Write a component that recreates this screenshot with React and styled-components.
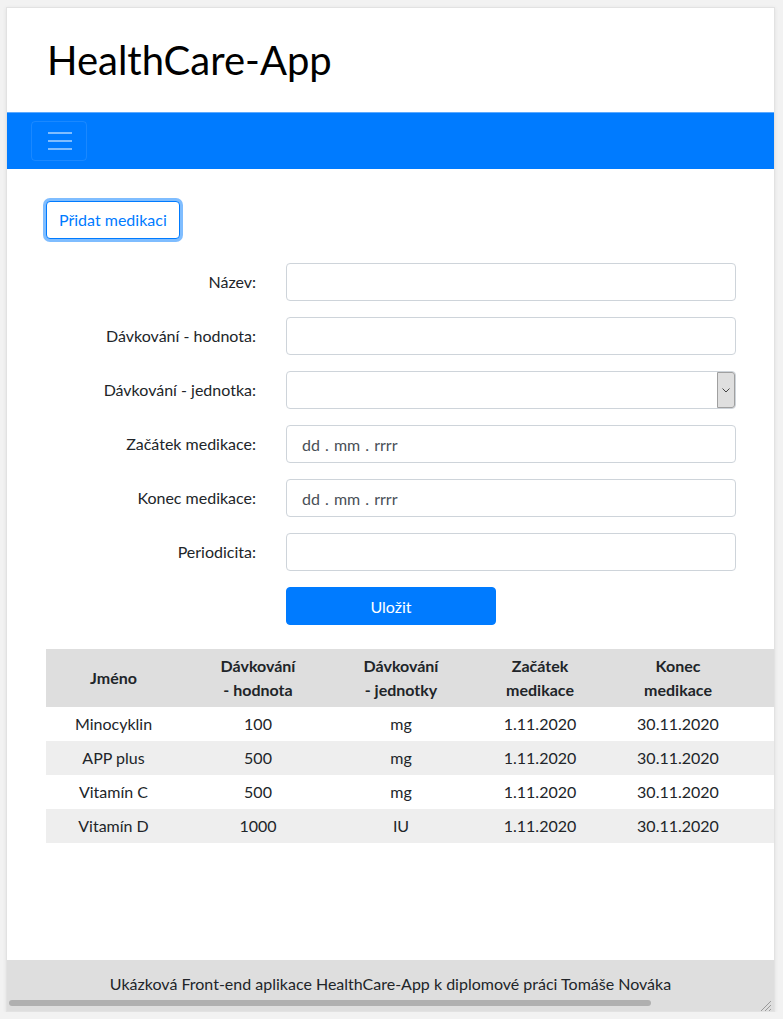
import React from 'react'
import styled, { createGlobalStyle } from 'styled-components'

const GlobalStyle = createGlobalStyle`
    html, body {
        margin: 0;
        padding: 0;
        background: #f2f2f2;
        font-family: Lato, "Noto Sans", sans-serif;
        color: #212529;
    }
`

const Frame = styled.div`
    margin: 7px 0 0 6px;
    width: 767px;
    height: 1003px;
    border: 1px solid #e2e2e2;
    box-shadow: 0 1px 4px rgba(0, 0, 0, 0.08);
    background: white;
    overflow: hidden;
`

const Page = styled.div`
    display: flex;
    flex-direction: column;
    height: 100%;
`

const Header = styled.header`
    height: 104px;
    flex-shrink: 0;
    display: flex;
    align-items: center;
    padding-left: 40px;

    h1 {
        margin: 0;
        font-size: 40px;
        font-weight: 400;
        line-height: 1.2;
        color: #000;
    }
`

const Navbar = styled.nav`
    background: #007bff;
    border-top: 1px solid #5caaff;
    height: 57px;
    flex-shrink: 0;
    padding: 8px 24px;
    box-sizing: border-box;
    display: flex;
    align-items: center;
`

const Toggler = styled.button`
    width: 56px;
    height: 40px;
    border: 1px solid rgba(255, 255, 255, 0.1);
    border-radius: 4px;
    background: transparent;
    display: flex;
    align-items: center;
    justify-content: center;
    padding: 0;
`

const Main = styled.main`
    padding: 32px 0 0 39px;
`

const AddButton = styled.button`
    font-family: inherit;
    font-size: 16px;
    line-height: 24px;
    color: #007bff;
    background: white;
    border: 1px solid #007bff;
    border-radius: 4px;
    padding: 6px 12px;
    box-shadow: 0 0 0 3px rgba(0, 123, 255, 0.5);
`

const Form = styled.form`
    display: grid;
    grid-template-columns: 210px 450px;
    column-gap: 30px;
    row-gap: 16px;
    margin-top: 24px;
`

const Label = styled.label`
    text-align: right;
    align-self: center;
    font-size: 16px;
    line-height: 24px;
`

const Input = styled.input`
    box-sizing: border-box;
    height: 38px;
    width: 100%;
    border: 1px solid #ced4da;
    border-radius: 4px;
    padding: 6px 15px;
    font-family: inherit;
    font-size: 16px;
    color: #495057;

    &::placeholder {
        color: #495057;
        opacity: 1;
        word-spacing: 1px;
    }
`

const SelectWrap = styled.div`
    position: relative;
    height: 38px;
`

const Select = styled.select`
    appearance: none;
    box-sizing: border-box;
    width: 100%;
    height: 38px;
    border: 1px solid #ced4da;
    border-radius: 4px;
    background: white;
    font-family: inherit;
    font-size: 16px;
`

const SelectArrow = styled.span`
    position: absolute;
    top: 1px;
    right: 1px;
    bottom: 1px;
    width: 16px;
    background: #dfdfdf;
    border: 1px solid #a0a0a0;
    border-radius: 0 3px 3px 0;
    display: flex;
    align-items: center;
    justify-content: center;
    pointer-events: none;
`

const SaveButton = styled.button`
    grid-column: 2;
    width: 210px;
    height: 38px;
    border: 1px solid #007bff;
    border-radius: 4px;
    background: #007bff;
    color: white;
    font-family: inherit;
    font-size: 16px;
`

const Table = styled.table`
    margin-top: 24px;
    border-collapse: collapse;
    table-layout: fixed;
    width: 843px;
    font-size: 16px;
    line-height: 24px;

    th, td {
        text-align: center;
        padding: 5px 2px;
        box-sizing: border-box;
    }
    th {
        background: #dedede;
        font-weight: 700;
    }
    tbody tr:nth-child(even) td {
        background: #eeeeee;
    }
`

const Th = styled.th`
    width: ${(p) => p.$w}px;
`

const Footer = styled.footer`
    margin-top: auto;
    flex-shrink: 0;
    background: #dedede;
    text-align: center;
    padding-top: 12px;
    font-size: 16px;
    line-height: 24px;
`

const ScrollRow = styled.div`
    height: 15px;
    display: flex;
    align-items: flex-start;
    justify-content: space-between;
    padding: 4px 2px 0 2px;
    box-sizing: border-box;
`

const ScrollThumb = styled.div`
    width: 642px;
    height: 6px;
    border-radius: 3px;
    background: #b0b0b0;
`

const meds = [
    ['Minocyklin', '100', 'mg'],
    ['APP plus', '500', 'mg'],
    ['Vitamín C', '500', 'mg'],
    ['Vitamín D', '1000', 'IU'],
]

const fields = [
    ['Název:', 'text'],
    ['Dávkování - hodnota:', 'text'],
    ['Dávkování - jednotka:', 'select'],
    ['Začátek medikace:', 'date'],
    ['Konec medikace:', 'date'],
    ['Periodicita:', 'text'],
]

function App() {
    return (
        <>
            <GlobalStyle />
            <Frame>
                <Page>
                    <Header>
                        <h1>HealthCare-App</h1>
                    </Header>

                    <Navbar>
                        <Toggler>
                            <svg width="30" height="30" viewBox="0 0 30 30">
                                <path d="M4 7h24M4 15h24M4 23h24" stroke="rgba(255,255,255,0.5)" strokeWidth="2" />
                            </svg>
                        </Toggler>
                    </Navbar>

                    <Main>
                        <AddButton>Přidat medikaci</AddButton>

                        <Form>
                            {fields.map(([label, type]) => (
                                <React.Fragment key={label}>
                                    <Label>{label}</Label>
                                    {type === 'select' ? (
                                        <SelectWrap>
                                            <Select />
                                            <SelectArrow>
                                                <svg width="8" height="5" viewBox="0 0 8 5">
                                                    <path d="M0.5 0.5L4 4L7.5 0.5" fill="none" stroke="#444" strokeWidth="1" />
                                                </svg>
                                            </SelectArrow>
                                        </SelectWrap>
                                    ) : (
                                        <Input placeholder={type === 'date' ? 'dd . mm . rrrr' : ''} />
                                    )}
                                </React.Fragment>
                            ))}
                            <SaveButton type="button">Uložit</SaveButton>
                        </Form>

                        <Table>
                            <thead>
                                <tr>
                                    <Th $w={135}>Jméno</Th>
                                    <Th $w={154}>Dávkování<br />- hodnota</Th>
                                    <Th $w={132}>Dávkování<br />- jednotky</Th>
                                    <Th $w={146}>Začátek<br />medikace</Th>
                                    <Th $w={130}>Konec<br />medikace</Th>
                                    <Th $w={146}></Th>
                                </tr>
                            </thead>
                            <tbody>
                                {meds.map((m) => (
                                    <tr key={m[0]}>
                                        <td>{m[0]}</td>
                                        <td>{m[1]}</td>
                                        <td>{m[2]}</td>
                                        <td>1.11.2020</td>
                                        <td>30.11.2020</td>
                                        <td></td>
                                    </tr>
                                ))}
                            </tbody>
                        </Table>
                    </Main>

                    <Footer>
                        Ukázková Front-end aplikace HealthCare-App k diplomové práci Tomáše Nováka
                        <ScrollRow>
                            <ScrollThumb />
                            <svg width="12" height="11" viewBox="0 0 12 11">
                                <path d="M11 1L1 11M11 5L5 11M11 9L9 11" stroke="#9a9a9a" strokeWidth="1" />
                            </svg>
                        </ScrollRow>
                    </Footer>
                </Page>
            </Frame>
        </>
    )
}

export default App
